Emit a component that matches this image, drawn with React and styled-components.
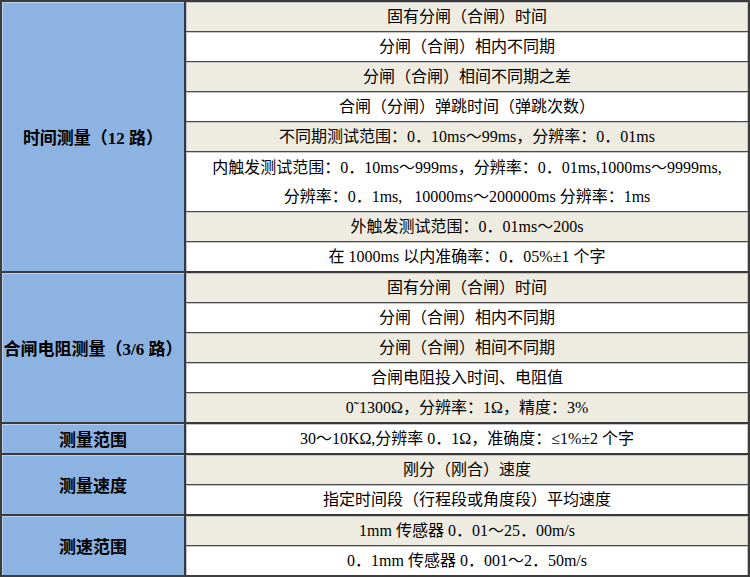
import React from 'react';
import styled, { createGlobalStyle } from 'styled-components';

const GlobalStyle = createGlobalStyle`
  html, body {
    margin: 0;
    padding: 0;
    background: #fff;
  }
  body {
    font-family: "Liberation Serif", "Noto Sans CJK SC", serif;
    color: #000;
  }
`;

const Table = styled.div`
  width: 750px;
  box-sizing: border-box;
  border-left: 2px solid #3d3d3d;
  border-right: 2px solid #3d3d3d;
  border-bottom: 2px solid #3d3d3d;
  display: flex;
  flex-direction: column;
`;

const Group = styled.section`
  display: flex;
  border-top: 2px solid #3a3a3a;
`;

const Head = styled.div`
  width: 182px;
  flex-shrink: 0;
  background: #8db3e2;
  border-right: 2px solid #2f3a48;
  box-shadow: inset 1px 1px 0 #b9d0ee;
  display: flex;
  align-items: center;
  justify-content: center;
  font-size: 17px;
  font-weight: bold;
  white-space: nowrap;
  letter-spacing: 0;
`;

const Cells = styled.div`
  flex: 1;
  display: flex;
  flex-direction: column;
`;

const Row = styled.div`
  height: ${(props) => (props.double ? '59px' : '29px')};
  background: ${(props) => (props.shaded ? '#eeece1' : '#ffffff')};
  box-shadow: inset 1px 1px 0 #c4c4c4, inset -1px 0 0 #c4c4c4;
  display: flex;
  flex-direction: column;
  align-items: center;
  justify-content: center;
  text-align: center;
  font-size: 16px;
  line-height: 29px;
  white-space: pre;

  & + & {
    border-top: 1px solid #4a4a4a;
  }
`;

const groups = [
  {
    title: '时间测量（12 路）',
    rows: [
      ['固有分闸（合闸）时间'],
      ['分闸（合闸）相内不同期'],
      ['分闸（合闸）相间不同期之差'],
      ['合闸（分闸）弹跳时间（弹跳次数）'],
      ['不同期测试范围：0．10ms～99ms，分辨率：0．01ms'],
      [
        '内触发测试范围：0．10ms～999ms，分辨率：0．01ms,1000ms～9999ms,',
        '分辨率：0．1ms,   10000ms～200000ms 分辨率：1ms',
      ],
      ['外触发测试范围：0．01ms～200s'],
      ['在 1000ms 以内准确率：0．05%±1 个字'],
    ],
    startShaded: true,
  },
  {
    title: '合闸电阻测量（3/6 路）',
    rows: [
      ['固有分闸（合闸）时间'],
      ['分闸（合闸）相内不同期'],
      ['分闸（合闸）相间不同期'],
      ['合闸电阻投入时间、电阻值'],
      ['0˜1300Ω，分辨率：1Ω，精度：3%'],
    ],
    startShaded: true,
  },
  {
    title: '测量范围',
    rows: [['30～10KΩ,分辨率 0．1Ω，准确度：≤1%±2 个字']],
    startShaded: false,
  },
  {
    title: '测量速度',
    rows: [['刚分（刚合）速度'], ['指定时间段（行程段或角度段）平均速度']],
    startShaded: true,
  },
  {
    title: '测速范围',
    rows: [['1mm 传感器 0．01～25．00m/s'], ['0．1mm 传感器 0．001～2．50m/s']],
    startShaded: true,
  },
];

const App = () => {
  return (
    <>
      <GlobalStyle />
      <Table>
        {groups.map((group) => (
          <Group key={group.title}>
            <Head>{group.title}</Head>
            <Cells>
              {group.rows.map((lines, i) => (
                <Row
                  key={i}
                  double={lines.length > 1}
                  shaded={group.startShaded ? i % 2 === 0 : i % 2 === 1}
                >
                  {lines.map((line) => (
                    <span key={line}>{line}</span>
                  ))}
                </Row>
              ))}
            </Cells>
          </Group>
        ))}
      </Table>
    </>
  );
};

export default App;
